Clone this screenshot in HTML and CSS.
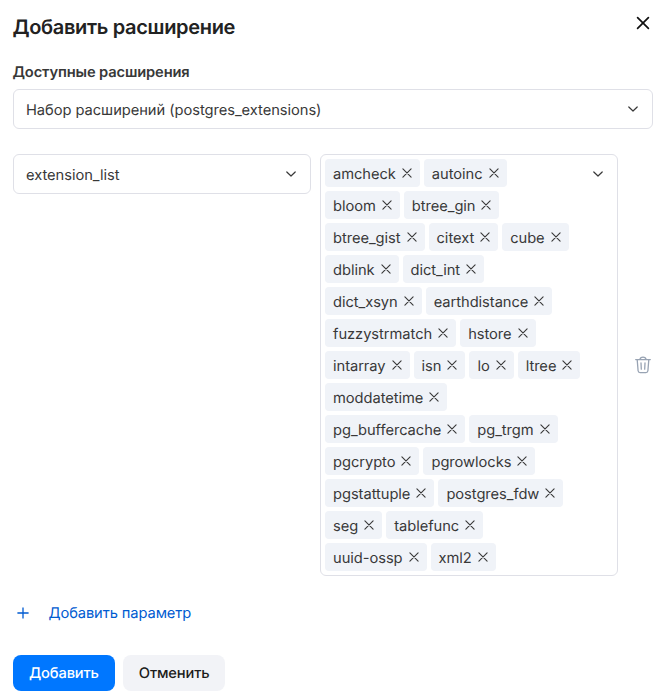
FILE: index.html
```
<!DOCTYPE html>
<html lang="ru">
<head>
<meta charset="utf-8">
<title>Добавить расширение</title>
<link rel="stylesheet" href="styles.css">
</head>
<body>
<svg class="defs" aria-hidden="true">
  <symbol id="chevron" viewBox="0 0 16 16"><path d="M3.8 6 8 10l4.200-4"/></symbol>
  <symbol id="cross" viewBox="0 0 10 10"><path d="M.9.9l8.200 8.200M9.100.9.9 9.100"/></symbol>
</svg>
<main class="dialog">
  <header class="head">
    <h1 class="title">Добавить расширение</h1>
    <button class="close" aria-label="Закрыть"><svg viewBox="0 0 14 14"><path d="M1.6 1.6l10.8 10.8M12.4 1.6 1.6 12.4"/></svg></button>
  </header>
  <label class="label">Доступные расширения</label>
  <div class="select"><span>Набор расширений (postgres_extensions)</span><svg class="chevron"><use href="#chevron"/></svg></div>
  <div class="param">
    <div class="select"><span>extension_list</span><svg class="chevron"><use href="#chevron"/></svg></div>
    <div class="multi">
      <div class="tags">
        <span class="tag">amcheck<svg><use href="#cross"/></svg></span>
        <span class="tag">autoinc<svg><use href="#cross"/></svg></span>
        <span class="tag">bloom<svg><use href="#cross"/></svg></span>
        <span class="tag">btree_gin<svg><use href="#cross"/></svg></span>
        <span class="tag">btree_gist<svg><use href="#cross"/></svg></span>
        <span class="tag">citext<svg><use href="#cross"/></svg></span>
        <span class="tag">cube<svg><use href="#cross"/></svg></span>
        <span class="tag">dblink<svg><use href="#cross"/></svg></span>
        <span class="tag">dict_int<svg><use href="#cross"/></svg></span>
        <span class="tag">dict_xsyn<svg><use href="#cross"/></svg></span>
        <span class="tag">earthdistance<svg><use href="#cross"/></svg></span>
        <span class="tag">fuzzystrmatch<svg><use href="#cross"/></svg></span>
        <span class="tag">hstore<svg><use href="#cross"/></svg></span>
        <span class="tag">intarray<svg><use href="#cross"/></svg></span>
        <span class="tag">isn<svg><use href="#cross"/></svg></span>
        <span class="tag">lo<svg><use href="#cross"/></svg></span>
        <span class="tag">ltree<svg><use href="#cross"/></svg></span>
        <span class="tag">moddatetime<svg><use href="#cross"/></svg></span>
        <span class="tag">pg_buffercache<svg><use href="#cross"/></svg></span>
        <span class="tag">pg_trgm<svg><use href="#cross"/></svg></span>
        <span class="tag">pgcrypto<svg><use href="#cross"/></svg></span>
        <span class="tag">pgrowlocks<svg><use href="#cross"/></svg></span>
        <span class="tag">pgstattuple<svg><use href="#cross"/></svg></span>
        <span class="tag">postgres_fdw<svg><use href="#cross"/></svg></span>
        <span class="tag">seg<svg><use href="#cross"/></svg></span>
        <span class="tag">tablefunc<svg><use href="#cross"/></svg></span>
        <span class="tag">uuid-ossp<svg><use href="#cross"/></svg></span>
        <span class="tag">xml2<svg><use href="#cross"/></svg></span>
      </div>
      <svg class="chevron"><use href="#chevron"/></svg>
    </div>
    <button class="trash" aria-label="Удалить"><svg viewBox="0 0 16 18"><path d="M.7 3.6h14.6M5 3.3C5.200 1.700 6.200 1.100 8 1.100s2.800.6 3 2.200M2.200 3.800l.9 11c.1 1.200.8 1.900 2 1.900h5.800c1.200 0 1.900-.7 2-1.900l.9-11M6 7l.3 6.200M10 7l-.3 6.200"/></svg></button>
  </div>
  <button class="add"><svg viewBox="0 0 12 12"><path d="M6 .4v11.200M.4 6h11.200"/></svg>Добавить параметр</button>
  <footer class="actions">
    <button class="btn primary">Добавить</button>
    <button class="btn">Отменить</button>
  </footer>
</main>
</body>
</html>
```
FILE: styles.css
```
* { box-sizing: border-box; }
body {
  margin: 0;
  background: #fff;
  color: #383838;
  font: 14.7px/20px Inter, "Liberation Sans", sans-serif;
  letter-spacing: -0.05px;
  text-rendering: geometricPrecision;
}
svg { display: block; flex: none; fill: none; stroke: currentColor; }
.defs { position: absolute; width: 0; height: 0; }
button { border: 0; padding: 0; background: none; font: inherit; color: inherit; letter-spacing: inherit; text-rendering: inherit; }
.dialog { padding: 13px 9px 0 13px; }
.head { display: flex; justify-content: space-between; height: 49px; }
.title { margin: 0 0 0 -0.5px; font-size: 20px; line-height: 28px; font-weight: 600; color: #222; letter-spacing: -0.33px; }
.close { width: 20px; height: 20px; display: grid; place-items: center; }
.close svg { width: 14px; height: 14px; stroke-width: 1.7; stroke-linecap: round; color: #111; }
.label { display: block; margin: 0 0 7px -0.5px; font-weight: 600; letter-spacing: -0.14px; }
.select {
  display: flex;
  align-items: center;
  justify-content: space-between;
  height: 40px;
  padding: 0 11px 0 12px;
  border: 1px solid #dfe0e7;
  border-radius: 6px;
}
.select span { padding-top: 2px; }
.chevron { width: 16px; height: 16px; stroke-width: 1.2; stroke-linecap: round; stroke-linejoin: round; }
.param { display: grid; grid-template-columns: 298px 298px 16px; column-gap: 9px; align-items: start; margin-top: 25px; }
.multi {
  display: flex;
  justify-content: space-between;
  height: 422px;
  padding: 4px 11px 4px 4px;
  border: 1px solid #dfe0e7;
  border-radius: 6px;
}
.multi .chevron { margin-top: 7px; }
.tags { display: flex; flex-wrap: wrap; align-content: flex-start; gap: 4px; width: 257px; }
.tag {
  display: flex;
  align-items: center;
  gap: 6px;
  height: 28px;
  padding: 1px 8px 0;
  border-radius: 4px;
  background: #f0f3f8;
}
.tag svg { width: 10px; height: 10px; margin-top: -2px; stroke-width: 1.1; stroke-linecap: round; }
.trash { align-self: center; margin-left: 8px; color: #98a3b3; }
.trash svg { width: 16px; height: 18px; stroke-width: 1.3; stroke-linecap: round; }
.add { display: flex; align-items: center; gap: 19.5px; margin: 27px 0 0 4px; color: #005bd1; line-height: 20px; letter-spacing: -0.1px; }
.add svg { width: 12px; height: 12px; stroke-width: 1.3; }
.actions { display: flex; gap: 8px; margin-top: 32px; }
.btn { height: 36px; padding: 0 16px; border-radius: 8px; background: #f2f3f7; color: #1c1c1c; font-weight: 500; letter-spacing: -0.16px; }
.btn.primary { background: #0077ff; color: #fff; }
```
